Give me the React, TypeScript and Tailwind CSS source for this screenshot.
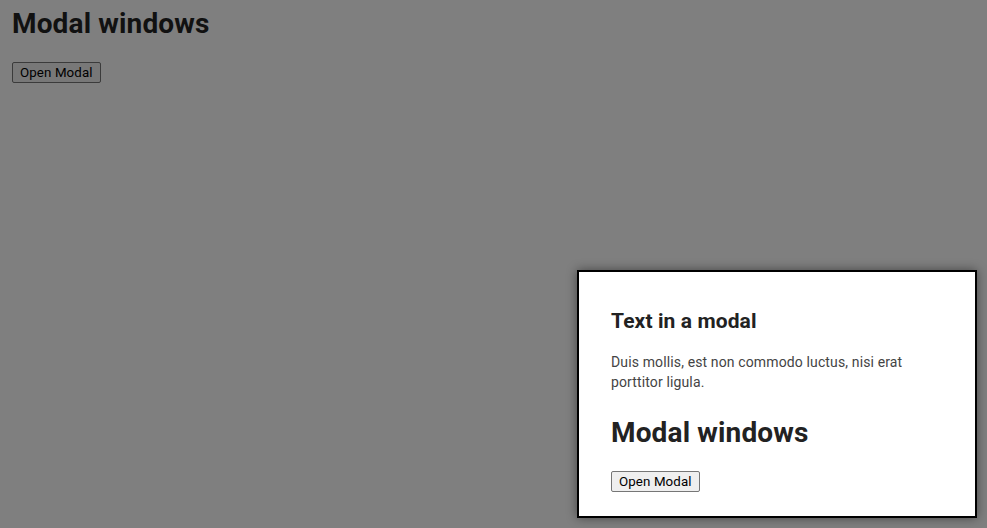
import React from "react";

function Btn({ dim }: { dim?: boolean }) {
  return (
    <button
      className={
        dim
          ? "h-[21px] rounded-[2px] border border-[#3b3b3b] bg-[#787878] px-[7px] text-[13.33px] leading-[19px] tracking-[0.1px] text-black"
          : "h-[21px] rounded-[2px] border border-[#767676] bg-[#efefef] px-[7px] text-[13.33px] leading-[19px] tracking-[0.1px] text-black"
      }
      style={{ fontFamily: "Roboto, Arial, sans-serif" }}
    >
      Open Modal
    </button>
  );
}

export default function App() {
  return (
    <div
      className="relative h-[528px] w-[987px] overflow-hidden bg-[#7f7f7f]"
      style={{ fontFamily: "Roboto, 'Liberation Sans', sans-serif" }}
    >
      <div className="flex flex-col items-start px-[12px] pt-[6px]">
        <h1 className="text-[28px] font-bold leading-[36px] tracking-[0.15px] text-[#111]">Modal windows</h1>
        <div className="mt-[18px]">
          <Btn dim />
        </div>
      </div>

      <div className="absolute bottom-[10px] right-[10px] flex h-[248px] w-[400px] flex-col items-start border-2 border-black bg-white px-[32px] pt-[35px] shadow-[0_0_10px_rgba(0,0,0,0.45)]">
        <h2 className="text-[21px] font-bold leading-[28px] tracking-[0.1px] text-[#222]">Text in a modal</h2>
        <p className="mt-[17px] text-[14px] leading-[20px] tracking-[0.13px] text-[#444]">
          Duis mollis, est non commodo luctus, nisi erat porttitor ligula.
        </p>
        <h1 className="mt-[23px] text-[28px] font-bold leading-[36px] tracking-[0.15px] text-[#222]">Modal windows</h1>
        <div className="mt-[18px]">
          <Btn />
        </div>
      </div>
    </div>
  );
}
